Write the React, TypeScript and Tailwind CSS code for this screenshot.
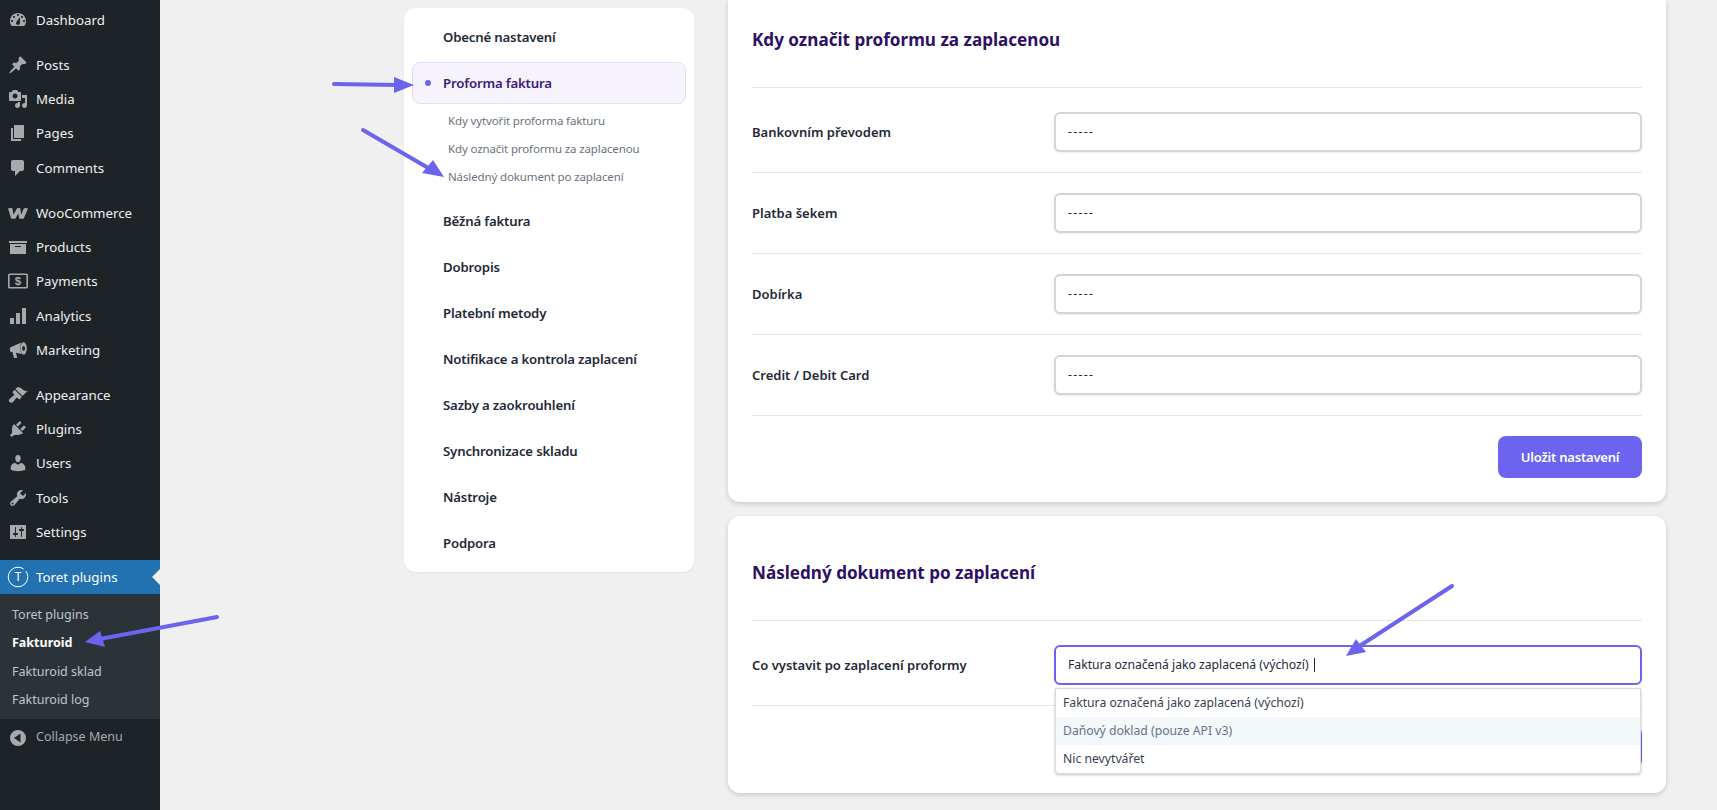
const P: Record<string, string> = {
  dashboard: "M3.76 16h12.48c1.1-1.37 1.76-3.11 1.76-5 0-4.42-3.58-8-8-8s-8 3.58-8 8c0 1.89.66 3.63 1.76 5zM10 4c.55 0 1 .45 1 1s-.45 1-1 1-1-.45-1-1 .45-1 1-1zM6 6c.55 0 1 .45 1 1s-.45 1-1 1-1-.45-1-1 .45-1 1-1zm8 0c.55 0 1 .45 1 1s-.45 1-1 1-1-.45-1-1 .45-1 1-1zm-5.37 5.55L12 7v6c0 1.1-.9 2-2 2s-2-.9-2-2c0-.57.24-1.08.63-1.45zM4 10c.55 0 1 .45 1 1s-.45 1-1 1-1-.45-1-1 .45-1 1-1zm12 0c.55 0 1 .45 1 1s-.45 1-1 1-1-.45-1-1 .45-1 1-1z",
  posts: "M10.44 3.02l1.82-1.82 6.36 6.35-1.83 1.82c-1.05-.68-2.48-.57-3.41.36l-.75.75c-.92.93-1.04 2.35-.35 3.41l-1.83 1.82-2.41-2.41-2.8 2.79c-.42.42-3.38 2.71-3.8 2.29s1.86-3.39 2.28-3.81l2.79-2.79L4.1 9.36l1.83-1.82c1.05.69 2.48.57 3.4-.36l.75-.75c.93-.92 1.05-2.35.36-3.41z",
  media: "M13 11V4c0-.55-.45-1-1-1h-1.67L9 1H5L3.67 3H2c-.55 0-1 .45-1 1v7c0 .55.45 1 1 1h10c.55 0 1-.45 1-1zM7 4.5c1.38 0 2.5 1.12 2.5 2.5S8.38 9.5 7 9.5 4.5 8.38 4.5 7 5.62 4.5 7 4.5zM14 6h5v10.5c0 1.38-1.12 2.5-2.5 2.5S14 17.88 14 16.5s1.12-2.5 2.5-2.5c.17 0 .34.02.5.05V9h-3V6zm-4 8.05V13h2v3.5c0 1.38-1.12 2.5-2.5 2.5S7 17.88 7 16.5 8.12 14 9.5 14c.17 0 .34.02.5.05z",
  pages: "M6 15V2h10v13H6zm-1 1h8v2H3V5h2v11z",
  comments: "M5 2h9c1.1 0 2 .9 2 2v7c0 1.1-.9 2-2 2h-2l-5 5v-5H5c-1.1 0-2-.9-2-2V4c0-1.1.9-2 2-2z",
  woo: "M0 5.2 L4.2 5 L5.6 11.8 L9 5.2 L12.2 5 L13.2 11.8 L15.8 5.4 Q17.5 4.6 20 5.4 L15.6 15.8 L11.4 15.8 L10.2 10.4 L7.4 15.8 L3.2 15.8 Z",
  products: "M19 4v2H1V4h18zM2 7h16v10H2V7zm11 3V9H7v1h6z",
  analytics: "M18 18V2h-4v16h4zm-6 0V7H8v11h4zm-6 0v-6H2v6h4z",
  marketing: "M13.5 2.6 L2.6 7.2 C1.6 7.7 1.6 11.2 2.6 11.8 L4.6 12.2 L6 18 L9.2 18 L8 12.8 L13.5 14 C11.8 11 11.8 5.6 13.5 2.6 Z M15.6 2.2 C13.6 2.2 12.6 5.4 12.6 8.4 C12.6 11.4 13.6 14.6 15.6 14.6 C17.6 14.6 18.8 11.4 18.8 8.4 C18.8 5.4 17.6 2.2 15.6 2.2 Z M15.6 6 C16.5 6 17 7.2 17 8.4 C17 9.6 16.5 10.8 15.6 10.8 C14.7 10.8 14.2 9.6 14.2 8.4 C14.2 7.2 14.7 6 15.6 6 Z",
  appearance: "M14.48 11.06L7.41 3.99l1.5-1.5c.5-.56 2.3-.47 3.51.32 1.21.8 1.43 1.28 2.91 2.1 1.18.64 2.45 1.26 4.45.85zm-.71.71L6.7 4.7 4.93 6.47c-.39.39-.39 1.02 0 1.41l1.06 1.06c.39.39.39 1.02 0 1.42-.6.6-1.43 1.11-2.21 1.69-.35.26-.7.53-1.01.84C1.43 13.73 0 15.3 1.63 16.99c1.63 1.69 3.19.24 4.05-.78.32-.32.59-.67.85-1.03.58-.78 1.09-1.61 1.69-2.21.39-.39 1.02-.39 1.41 0l1.06 1.06c.39.39 1.02.39 1.41 0z",
  plugins: "M13.11 4.36L9.87 7.6 8 5.73l3.24-3.24c.35-.34 1.05-.2 1.56.32.52.51.66 1.21.31 1.55zm-8 1.77l.91-1.12 9.01 9.01-1.19.84c-.71.71-2.63 1.16-3.82 1.16H6.14L4.9 17.26c-.59.59-1.54.59-2.12 0-.59-.58-.59-1.53 0-2.12l1.24-1.24v-3.88c0-1.13.4-3.19 1.09-3.89zm7.26 3.97l3.24-3.24c.34-.35 1.04-.21 1.55.31.52.51.66 1.21.31 1.55l-3.24 3.25z",
  users: "M10 9.25c-2.27 0-2.73-3.44-2.73-3.44C7 4.02 7.82 2 9.97 2c2.16 0 2.98 2.02 2.71 3.81 0 0-.41 3.44-2.68 3.44zm0 2.57L12.72 10c2.39 0 4.52 2.33 4.52 4.53v2.49s-3.65 1.13-7.24 1.13c-3.65 0-7.24-1.13-7.24-1.13v-2.49c0-2.25 1.94-4.48 4.47-4.48z",
  tools: "M16.68 9.77c-1.34 1.34-3.3 1.67-4.95.99l-5.41 6.52c-.99.99-2.59.99-3.57 0-.99-.98-.99-2.58 0-3.57l6.52-5.42c-.68-1.65-.35-3.61.99-4.95 1.28-1.28 3.12-1.62 4.72-1.06l-2.89 2.89 2.82 2.82 2.86-2.87c.53 1.58.18 3.4-1.09 4.65zM3.81 16.21c.4.39 1.04.39 1.43 0 .4-.4.4-1.04 0-1.43-.39-.4-1.03-.4-1.43 0-.39.39-.39 1.03 0 1.43z",
  settings: "M18 16V4c0-.55-.45-1-1-1H3c-.55 0-1 .45-1 1v12c0 .55.45 1 1 1h14c.55 0 1-.45 1-1zM8 11h1c.55 0 1 .45 1 1s-.45 1-1 1H8v1.5c0 .28-.22.5-.5.5s-.5-.22-.5-.5V13H6c-.55 0-1-.45-1-1s.45-1 1-1h1V5.5c0-.28.22-.5.5-.5s.5.22.5.5V11zm5-2h-1c-.55 0-1-.45-1-1s.45-1 1-1h1V5.5c0-.28.22-.5.5-.5s.5.22.5.5V7h1c.55 0 1 .45 1 1s-.45 1-1 1h-1v5.5c0 .28-.22.5-.5.5s-.5-.22-.5-.5V9z",
  collapse: "M10 2a8 8 0 1 0 0 16 8 8 0 0 0 0-16zm2.5 3.5v9L6 10z",
};

function Dash({ name }: { name: string }) {
  return (
    <svg viewBox="0 0 20 20" className="w-5 h-5 shrink-0 fill-[#a7aaad]" fillRule="evenodd">
      <path d={P[name]} />
    </svg>
  );
}

function PaymentsIcon() {
  return (
    <svg viewBox="0 0 20 20" className="w-5 h-5 shrink-0">
      <rect x="0.8" y="3.2" width="18.4" height="13.6" rx="0.8" fill="none" stroke="#a7aaad" strokeWidth="1.6" />
      <text x="10" y="14.2" textAnchor="middle" fontSize="11.5" fontWeight="700" fill="#a7aaad" fontFamily="'Liberation Sans', sans-serif">$</text>
    </svg>
  );
}

function ToretIcon() {
  return (
    <svg viewBox="0 0 22 22" className="w-[22px] h-[22px] shrink-0 -ml-[1px] -mr-[1px]">
      <circle cx="11" cy="11" r="9.8" fill="none" stroke="#fff" strokeWidth="1" strokeDasharray="52 3 5.3 0" />
      <text x="11" y="15.2" textAnchor="middle" fontSize="12" fontWeight="400" fill="#fff" fontFamily="'Noto Sans', sans-serif">T</text>
    </svg>
  );
}

function MenuRow({ icon, label }: { icon: string; label: string }) {
  return (
    <div className="h-[34.3px] flex items-center pl-2 gap-2 text-[#f0f0f1]">
      {icon === "payments" ? <PaymentsIcon /> : <Dash name={icon} />}
      <span className="mt-[2px]">{label}</span>
    </div>
  );
}

const groups: [string, string][][] = [
  [["dashboard", "Dashboard"]],
  [["posts", "Posts"], ["media", "Media"], ["pages", "Pages"], ["comments", "Comments"]],
  [["woo", "WooCommerce"], ["products", "Products"], ["payments", "Payments"], ["analytics", "Analytics"], ["marketing", "Marketing"]],
  [["appearance", "Appearance"], ["plugins", "Plugins"], ["users", "Users"], ["tools", "Tools"], ["settings", "Settings"]],
];

function Sidebar() {
  return (
    <aside className="w-40 shrink-0 h-full bg-[#1d2327] pt-[2.7px] text-[13.3px] font-['Noto_Sans',sans-serif]">
      {groups.map((g, i) => (
        <div key={i} className="mb-[10.7px]">
          {g.map(([ic, l]) => (
            <MenuRow key={l} icon={ic} label={l} />
          ))}
        </div>
      ))}
      <div className="relative h-[34.3px] flex items-center pl-2 gap-2 bg-[#2271b1] text-white">
        <ToretIcon />
        <span className="mt-[2px]">Toret plugins</span>
        <span className="absolute right-0 top-1/2 -translate-y-1/2 w-0 h-0 border-y-[8px] border-y-transparent border-r-[8px] border-r-[#f0f0f1]" />
      </div>
      <div className="bg-[#2c3338] pt-[7px] pb-[5px] text-[12.5px] text-[#c3c4c7]">
        <div className="h-[28.3px] flex items-center pl-3">Toret plugins</div>
        <div className="h-[28.3px] flex items-center pl-3 font-bold text-white">Fakturoid</div>
        <div className="h-[28.3px] flex items-center pl-3">Fakturoid sklad</div>
        <div className="h-[28.3px] flex items-center pl-3">Fakturoid log</div>
      </div>
      <div className="h-[34.3px] mt-[1px] flex items-center pl-2 gap-2 text-[12.5px] text-[#a7aaad]">
        <Dash name="collapse" />
        <span>Collapse Menu</span>
      </div>
    </aside>
  );
}

const navAfter = ["Běžná faktura", "Dobropis", "Platební metody", "Notifikace a kontrola zaplacení", "Sazby a zaokrouhlení", "Synchronizace skladu", "Nástroje", "Podpora"];

function NavItem({ label }: { label: string }) {
  return <div className="h-[42px] flex items-center pl-[31px] pt-[2px] text-[13.2px] tracking-[-0.17px] font-semibold text-[#1f2937]">{label}</div>;
}

function Nav() {
  return (
    <nav className="w-[290px] shrink-0 self-start mt-2 bg-white rounded-xl p-2 flex flex-col gap-1 shadow-[0_1px_2px_rgba(0,0,0,0.06)]">
      <NavItem label="Obecné nastavení" />
      <div>
        <div className="h-[42px] flex items-center gap-[12px] pl-[12px] rounded-lg border border-[#e4dcfb] bg-[#f6f3fd] text-[13.2px] tracking-[-0.17px] font-semibold text-[#3b1a78]">
          <span className="w-[6px] h-[6px] rounded-full bg-[#6c63ef]" />
          <span className="mt-[2px]">Proforma faktura</span>
        </div>
        <div className="pl-[36px] pt-[3px] pb-[5px] text-[11.5px] tracking-[-0.13px] text-[#6b7280]">
          <div className="h-7 flex items-center">Kdy vytvořit proforma fakturu</div>
          <div className="h-7 flex items-center">Kdy označit proformu za zaplacenou</div>
          <div className="h-7 flex items-center">Následný dokument po zaplacení</div>
        </div>
      </div>
      {navAfter.map((l) => (
        <NavItem key={l} label={l} />
      ))}
    </nav>
  );
}

function Select({ value, focused, dashes }: { value: string; focused?: boolean; dashes?: boolean }) {
  return (
    <div
      className={
        "w-[588px] h-10 rounded-md border-2 bg-white flex items-center pl-3 text-[#1f2937] " +
        (dashes ? "text-[12.2px] tracking-[1.3px] " : "text-[12.2px] ") +
        (focused ? "border-[#6c63ef]" : "border-[#d1d5db] shadow-[0_1px_2px_rgba(0,0,0,0.08)]")
      }
    >
      <span>{value}</span>
      {focused && <span className="ml-[5px] w-px h-[14px] bg-[#1f2937]" />}
    </div>
  );
}

function Row({ label, value }: { label: string; value: string }) {
  return (
    <div className="h-[81px] border-b border-[#e5e7eb] flex items-center">
      <div className="w-[302px] shrink-0 mt-[2px] text-[13px] font-semibold text-[#1f2937]">{label}</div>
      <Select value={value} dashes />
    </div>
  );
}

function SaveButton() {
  return (
    <button className="w-36 h-[42px] rounded-lg bg-[#6c63ef] pt-[2px] text-white text-[13px] tracking-[-0.2px] font-semibold">Uložit nastavení</button>
  );
}

function Content() {
  return (
    <div className="w-[938px] shrink-0 flex flex-col gap-[14px]">
      <section className="bg-white rounded-b-xl px-6 pb-6 h-[502px] shadow-[0_2px_5px_rgba(0,0,0,0.16)]">
        <h2 className="h-[87px] border-b border-[#e5e7eb] text-[17.1px] font-bold text-[#2e1065] leading-[80px] box-content">Kdy označit proformu za zaplacenou</h2>
        <div className="mt-[4px]">
          <Row label="Bankovním převodem" value="-----" />
          <Row label="Platba šekem" value="-----" />
          <Row label="Dobírka" value="-----" />
          <Row label="Credit / Debit Card" value="-----" />
        </div>
        <div className="flex justify-end pt-5">
          <SaveButton />
        </div>
      </section>
      <section className="relative bg-white rounded-xl px-6 h-[277px] shadow-[0_2px_5px_rgba(0,0,0,0.16)]">
        <div className="h-[105px] border-b border-[#e5e7eb] flex items-center">
          <h2 className="text-[17.1px] font-bold text-[#2e1065] mt-[9px]">Následný dokument po zaplacení</h2>
        </div>
        <div className="h-[85px] border-b border-[#e5e7eb] flex items-center pt-[4px]">
          <div className="w-[302px] shrink-0 mt-[2px] text-[13px] font-semibold text-[#1f2937]">Co vystavit po zaplacení proformy</div>
          <Select value="Faktura označená jako zaplacená (výchozí)" focused />
        </div>
        <div className="flex justify-end pt-5">
          <SaveButton />
        </div>
        <div className="absolute left-[327px] top-[172px] w-[586px] bg-white border border-[#d9dbe0] rounded-b-sm shadow-[0_1px_3px_rgba(0,0,0,0.25)] text-[12.2px]">
          <div className="h-7 flex items-center pl-[7px] text-[#374151]">Faktura označená jako zaplacená (výchozí)</div>
          <div className="h-7 flex items-center pl-[7px] bg-[#f3f8fb] text-[#64748b]">Daňový doklad (pouze API v3)</div>
          <div className="h-7 flex items-center pl-[7px] text-[#374151]">Nic nevytvářet</div>
        </div>
      </section>
    </div>
  );
}

function Arrows() {
  const c = "#6c63ef";
  const lines = [
    [334, 84, 398, 85],
    [363, 130, 430, 169],
    [217, 617, 100, 639],
    [1452, 586, 1358, 647],
  ];
  const heads = [
    "414,85 394,77 394,93",
    "444,177 422,173 433,160",
    "85,642 100,631 105,647",
    "1346,656 1356,639 1366,652",
  ];
  return (
    <svg className="absolute inset-0 w-full h-full pointer-events-none" viewBox="0 0 1717 810">
      {lines.map((l, i) => (
        <line key={i} x1={l[0]} y1={l[1]} x2={l[2]} y2={l[3]} stroke={c} strokeWidth="4" strokeLinecap="round" />
      ))}
      {heads.map((h, i) => (
        <polygon key={i} points={h} fill={c} />
      ))}
    </svg>
  );
}

export default function App() {
  return (
    <div className="relative w-[1717px] h-[810px] overflow-hidden bg-[#f0f0f1] flex font-['Noto_Sans',sans-serif]">
      <Sidebar />
      <main className="flex-1 flex items-start pl-[244px] gap-[34px]">
        <Nav />
        <Content />
      </main>
      <Arrows />
    </div>
  );
}
